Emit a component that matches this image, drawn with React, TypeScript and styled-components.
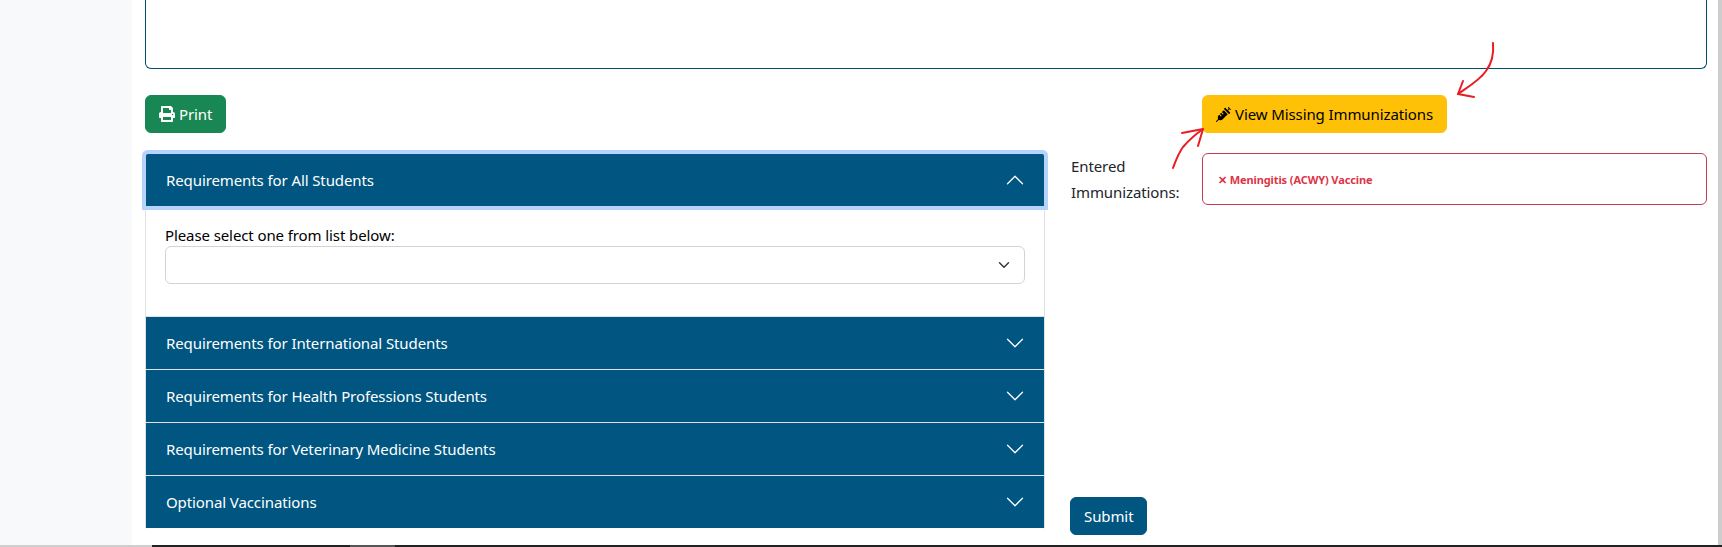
import React from "react";
import styled, { createGlobalStyle } from "styled-components";
import { FaPrint, FaSyringe } from "react-icons/fa";

const Global = createGlobalStyle`
  html, body { margin: 0; padding: 0; height: 547px; overflow: hidden; background: #fff; }
  body { font-family: "Noto Sans", "Open Sans", "Liberation Sans", sans-serif; font-size: 15px; color: #212529; }
  * { box-sizing: border-box; }
`;

const Page = styled.div`
  position: relative;
  width: 1722px;
  height: 547px;
  display: flex;
  flex-direction: column;
  overflow: hidden;
`;
const Body = styled.div`
  flex: 1;
  min-height: 0;
  display: flex;
`;
const Sidebar = styled.aside`
  width: 132px;
  background: #f8f9fa;
`;
const Main = styled.main`
  flex: 1;
  padding: 0 11px 0 13px;
`;
const Scrollbar = styled.div`
  width: 4px;
  background: #cdcdcd;
`;
const Notes = styled.div`
  height: 69px;
  border: 1px solid #00506f;
  border-top: none;
  border-radius: 0 0 6px 6px;
  margin-bottom: 26px;
`;
const Columns = styled.div`
  display: grid;
  grid-template-columns: 900px 637px;
  column-gap: 25px;
  height: 440px;
`;
const LeftColumn = styled.section`
  display: flex;
  flex-direction: column;
  align-items: flex-start;
  gap: 21px;
`;
const RightColumn = styled.section`
  display: flex;
  flex-direction: column;
`;
const Button = styled.button<{ $bg: string; $fg: string }>`
  display: inline-flex;
  align-items: center;
  gap: 4px;
  height: 38px;
  padding: 0 13px;
  border: 1px solid ${(p) => p.$bg};
  border-radius: 6px;
  background: ${(p) => p.$bg};
  color: ${(p) => p.$fg};
  font: inherit;
  letter-spacing: -0.1px;
`;
const Accordion = styled.div`
  width: 100%;
`;
const Item = styled.div`
  border: 1px solid #dee2e6;
  border-top: none;
  &:last-child { border-bottom: 1px solid #fff; }
  &:not(:first-child) { margin-top: 0; }
`;
const Header = styled.div<{ $focus?: boolean }>`
  position: relative;
  display: flex;
  align-items: center;
  justify-content: space-between;
  height: 52px;
  padding: 0 20px 0 20px;
  background: #005581;
  color: #fff;
  letter-spacing: -0.1px;
  ${(p) => p.$focus && "box-shadow: 0 0 0 4px #b6d4fb; border-radius: 2px 2px 0 0;"}
`;
const Chevron = styled.svg<{ $open?: boolean }>`
  width: 20px;
  height: 20px;
  fill: #fff;
  margin-right: -1px;
  transform: ${(p) => (p.$open ? "rotate(180deg)" : "none")};
`;
const Panel = styled.div`
  padding: 17px 19px 32px;
  height: 110px;
`;
const FieldLabel = styled.label`
  display: block;
  height: 23px;
  line-height: 24px;
  color: #000;
  letter-spacing: -0.1px;
`;
const SelectBox = styled.div`
  display: flex;
  align-items: center;
  justify-content: flex-end;
  height: 38px;
  border: 1px solid #ced4da;
  border-radius: 6px;
  padding-right: 12px;
  background: #fff;
`;
const Caret = styled.svg`
  width: 16px;
  height: 12px;
  fill: none;
  stroke: #343a40;
  stroke-width: 2;
  stroke-linecap: round;
  stroke-linejoin: round;
`;
const TopRow = styled.div`
  height: 38px;
  padding-left: 132px;
  margin-bottom: 20px;
`;
const EntryRow = styled.div`
  display: grid;
  grid-template-columns: 132px 505px;
`;
const EntryLabel = styled.div`
  line-height: 26px;
  padding-top: 0;
  padding-left: 1px;
  letter-spacing: -0.1px;
`;
const InvalidBox = styled.div`
  display: flex;
  align-items: center;
  height: 52px;
  padding: 0 15px;
  border: 1px solid #c43b56;
  border-radius: 6px;
  color: #dc3545;
  font-size: 11px;
  font-weight: 700;
  letter-spacing: -0.1px;
`;
const SubmitWrap = styled.div`
  margin-top: auto;
`;
const Strip = styled.div`
  height: 2px;
  display: grid;
  grid-template-columns: 152px 198px 45px 1fr;
`;
const StripPart = styled.div<{ $c: string }>`
  background: ${(p) => p.$c};
`;
const Annotations = styled.svg`
  position: absolute;
  left: 0;
  top: 0;
  pointer-events: none;
  fill: none;
  stroke: #ea1c24;
  stroke-width: 2;
  stroke-linecap: round;
  stroke-linejoin: round;
`;

const chevronPath =
  "M1.646 4.646a.5.5 0 0 1 .708 0L8 10.293l5.646-5.647a.5.5 0 0 1 .708.708l-6 6a.5.5 0 0 1-.708 0l-6-6a.5.5 0 0 1 0-.708z";

const Row = ({ title, open, focus }: { title: string; open?: boolean; focus?: boolean }) => (
  <Header $focus={focus}>
    <span>{title}</span>
    <Chevron $open={open} viewBox="0 0 16 16">
      <path fillRule="evenodd" d={chevronPath} />
    </Chevron>
  </Header>
);

export default function App() {
  return (
    <Page>
      <Global />
      <Body>
        <Sidebar />
        <Main>
          <Notes />
          <Columns>
            <LeftColumn>
              <Button $bg="#198754" $fg="#fff">
                <FaPrint size={16} /> Print
              </Button>
              <Accordion>
                <Item>
                  <Row title="Requirements for All Students" open focus />
                  <Panel>
                    <FieldLabel>Please select one from list below:</FieldLabel>
                    <SelectBox>
                      <Caret viewBox="0 0 16 16">
                        <path d="m2 5 6 6 6-6" />
                      </Caret>
                    </SelectBox>
                  </Panel>
                </Item>
                <Item><Row title="Requirements for International Students" /></Item>
                <Item><Row title="Requirements for Health Professions Students" /></Item>
                <Item><Row title="Requirements for Veterinary Medicine Students" /></Item>
                <Item><Row title="Optional Vaccinations" /></Item>
              </Accordion>
            </LeftColumn>
            <RightColumn>
              <TopRow>
                <Button $bg="#ffc107" $fg="#000">
                  <FaSyringe size={15} /> View Missing Immunizations
                </Button>
              </TopRow>
              <EntryRow>
                <EntryLabel>Entered<br />Immunizations:</EntryLabel>
                <InvalidBox>✕ Meningitis (ACWY) Vaccine</InvalidBox>
              </EntryRow>
              <SubmitWrap>
                <Button $bg="#005581" $fg="#fff">Submit</Button>
              </SubmitWrap>
            </RightColumn>
          </Columns>
        </Main>
        <Scrollbar />
      </Body>
      <Strip>
        <StripPart $c="#cfcfcf" />
        <StripPart $c="#222" />
        <StripPart $c="#555" />
        <StripPart $c="#222" />
      </Strip>
      <Annotations width="1722" height="547" viewBox="0 0 1722 547">
        <path d="M1493 43 C1494 54 1492 63 1486 71 C1480 80 1468 87 1458 94" />
        <path d="M1463 81 L1458 94 L1474 97" />
        <path d="M1173 168 C1176 160 1178 154 1183 147 C1189 140 1196 134 1203 129" />
        <path d="M1182 133 L1203 129 L1198 146" />
      </Annotations>
    </Page>
  );
}
